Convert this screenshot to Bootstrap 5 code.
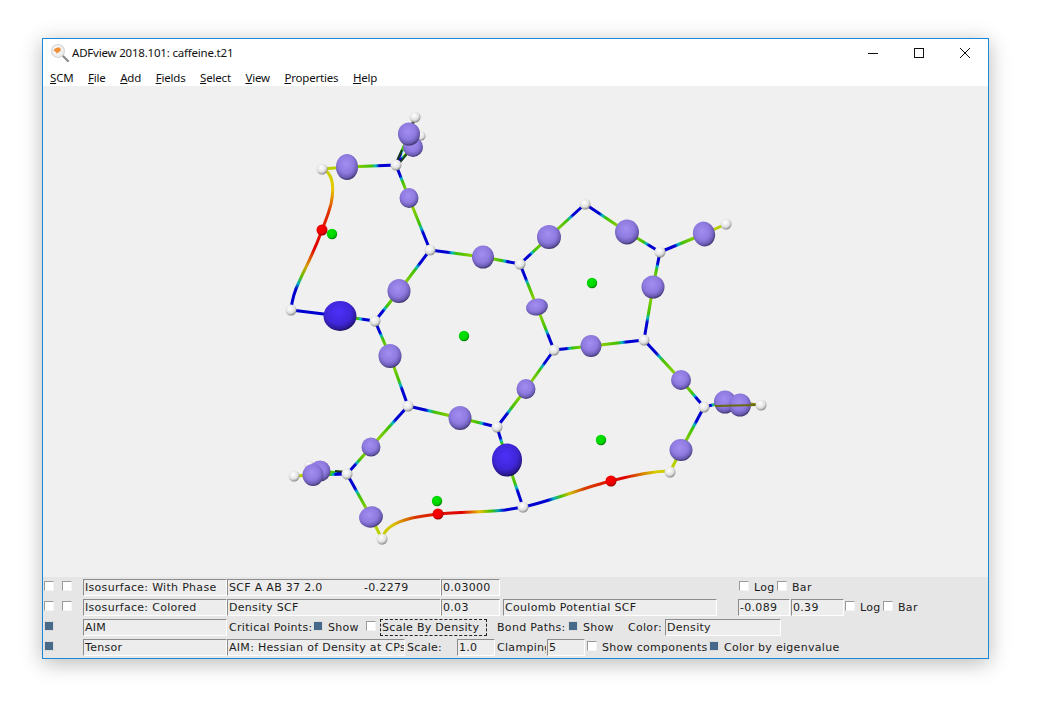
<!DOCTYPE html>
<html lang="en">
<head>
<meta charset="utf-8">
<title>ADFview 2018.101: caffeine.t21</title>
<link href="https://cdn.jsdelivr.net/npm/bootstrap@5.3.0/dist/css/bootstrap.min.css" rel="stylesheet">
<style>
html,body{background:#fff;margin:0;height:100%;overflow:hidden}
.stage{padding:38px 60px 0 42px}
.appwin{width:947px;height:621px;border:1px solid #1c86d8;background:#fff;box-shadow:0 4px 20px rgba(0,0,0,.28);color:#111}
.titlerow{height:27px;padding-left:7px;font:11.5px "Noto Sans",sans-serif;letter-spacing:-.2px;color:#111}
.titlerow .apptitle{margin-left:2px}
.ctrl-btn{width:46px;height:27px;display:flex;align-items:center;justify-content:center}
.menurow{height:20px;padding:2px 0 0 7px;gap:14.5px;font:11.5px "Noto Sans",sans-serif;letter-spacing:-.18px;line-height:20px}
.menurow .nav-link{padding:0;color:#111}
.canvas3d{display:block;width:945px;height:491px;background:#f0f0f0}
.ctlpanel{height:81px;background:#e6e6e6;padding-left:1px;font:11px "DejaVu Sans",sans-serif;color:#1c1c1c;letter-spacing:.3px}
.ctlrow{height:20px;align-items:center;white-space:nowrap}
.winchk.form-check-input{width:10px;height:10px;margin-top:0;margin-bottom:2px;flex:none;border:1px solid;border-color:#9a9a9a #f4f4f4 #f4f4f4 #9a9a9a;border-radius:0;background:#fff;box-shadow:none}
.winchk.form-check-input:checked{background:#47698a;border-color:#dcdcdc;box-shadow:inset 0 0 0 1px #47698a;background-image:none}
.winfield{height:17px;line-height:15px;padding-left:1px;background:#ededed;border:1px solid;border-color:#8c8c8c #fff #fff #8c8c8c;overflow:hidden;flex:none}
.spread{display:flex;justify-content:space-between}
.lbl{flex:none}
.cliplbl{flex:none;overflow:hidden}
.dashbox{height:17px;line-height:15px;border:1px dashed #222;flex:none;padding-left:1px}
.wd23{width:23px}.wd33{width:33px}.wd37{width:37px}.wd45{width:45px}.wd71{width:71px}.wd76{width:76px}.wd107{width:107px}
.wd38{width:38px}.wd49{width:49px}.wd50{width:50px}.wd52{width:52px}.wd53{width:53px}.wd59{width:59px}.wd84{width:84px}.wd116{width:116px}.wd144{width:144px}.wd178{width:178px}.wd214{width:214px}
.ml1{margin-left:1px}.ml2{margin-left:2px}.ml3{margin-left:3px}.ml4{margin-left:4px}.ml5{margin-left:5px}.ml8{margin-left:8px}.ml10{margin-left:10px}.ml11{margin-left:11px}.ml21{margin-left:21px}.ml29{margin-left:29px}.ml239{margin-left:239px}
</style>
</head>
<body>
<div class="stage">
<div class="appwin d-flex flex-column">
  <div class="titlerow d-flex align-items-center">
    <svg width="20" height="20" viewBox="0 0 20 20" aria-hidden="true">
      <defs><radialGradient id="lens" cx=".4" cy=".4" r=".7"><stop offset="0" stop-color="#fff"/><stop offset="1" stop-color="#e4e4e4"/></radialGradient></defs>
      <line x1="12" y1="12" x2="18" y2="18" stroke="#8a8a8a" stroke-width="2.2" stroke-linecap="round"/>
      <circle cx="8" cy="8" r="6.5" fill="url(#lens)" stroke="#d6d6d6" stroke-width="1.2"/>
      <path d="M3.500 7.500C4 5.500 6.500 4 9.500 4.500c1.200 .8 1.700 2.500 1 3.800C9 8.300 8.500 10.500 6.800 10.500 6 9 5 8 3.500 7.500z" fill="#ee9038"/>
    </svg>
    <span class="apptitle flex-grow-1">ADFview 2018.101: caffeine.t21</span>
    <div class="ctrl-btn"><svg width="10" height="10" viewBox="0 0 10 10" aria-hidden="true"><line x1="0" y1="5.500" x2="10" y2="5.500" stroke="#111"/></svg></div>
    <div class="ctrl-btn"><svg width="10" height="10" viewBox="0 0 10 10" aria-hidden="true"><rect x=".5" y=".5" width="9" height="9" fill="none" stroke="#111"/></svg></div>
    <div class="ctrl-btn"><svg width="10" height="10" viewBox="0 0 10 10" aria-hidden="true"><path d="M0 0L10 10M10 0L0 10" stroke="#111" fill="none"/></svg></div>
  </div>
  <nav class="menurow nav">
    <a class="nav-link" href="#"><u>S</u>CM</a>
    <a class="nav-link" href="#"><u>F</u>ile</a>
    <a class="nav-link" href="#"><u>A</u>dd</a>
    <a class="nav-link" href="#"><u>F</u>ields</a>
    <a class="nav-link" href="#"><u>S</u>elect</a>
    <a class="nav-link" href="#"><u>V</u>iew</a>
    <a class="nav-link" href="#"><u>P</u>roperties</a>
    <a class="nav-link" href="#"><u>H</u>elp</a>
  </nav>
  <svg class="canvas3d" id="mol" viewBox="43 86 945 491" role="img" aria-label="Caffeine molecule with bond paths and critical points">
    <defs>
      <radialGradient id="gP" cx=".45" cy=".38" r=".64"><stop offset="0" stop-color="#a28ef0"/><stop offset=".55" stop-color="#8f7be0"/><stop offset=".82" stop-color="#6c5cb4"/><stop offset="1" stop-color="#352c60"/></radialGradient>
      <radialGradient id="gB" cx=".45" cy=".38" r=".64"><stop offset="0" stop-color="#4d30f8"/><stop offset=".62" stop-color="#3f26d8"/><stop offset=".86" stop-color="#2c1a98"/><stop offset="1" stop-color="#160d50"/></radialGradient>
      <radialGradient id="gW" cx=".42" cy=".36" r=".68"><stop offset="0" stop-color="#fff"/><stop offset=".6" stop-color="#e2e2e2"/><stop offset=".85" stop-color="#a8a8a8"/><stop offset="1" stop-color="#666"/></radialGradient>
      <radialGradient id="gR" cx=".42" cy=".38" r=".65"><stop offset="0" stop-color="#ff0000"/><stop offset=".7" stop-color="#e80000"/><stop offset="1" stop-color="#800000"/></radialGradient>
      <radialGradient id="gG" cx=".42" cy=".38" r=".65"><stop offset="0" stop-color="#00e800"/><stop offset=".7" stop-color="#00d000"/><stop offset="1" stop-color="#006a00"/></radialGradient>
      <linearGradient id="c1" gradientUnits="userSpaceOnUse" x1="322" y1="169" x2="291" y2="310"><stop offset="0" stop-color="#c8d000"/><stop offset=".12" stop-color="#e8c800"/><stop offset=".28" stop-color="#e03000"/><stop offset=".55" stop-color="#e00000"/><stop offset=".68" stop-color="#d8a000"/><stop offset=".76" stop-color="#60c000"/><stop offset=".81" stop-color="#00b0c0"/><stop offset=".85" stop-color="#0000d0"/><stop offset="1" stop-color="#0000d0"/></linearGradient>
      <linearGradient id="c2" gradientUnits="userSpaceOnUse" x1="382" y1="539" x2="523" y2="507"><stop offset="0" stop-color="#c8d000"/><stop offset=".1" stop-color="#d8c000"/><stop offset=".27" stop-color="#d83000"/><stop offset=".58" stop-color="#e00000"/><stop offset=".7" stop-color="#e8c000"/><stop offset=".78" stop-color="#40c000"/><stop offset=".83" stop-color="#00a0c0"/><stop offset=".87" stop-color="#0000d0"/><stop offset="1" stop-color="#0000d0"/></linearGradient>
      <linearGradient id="c3" gradientUnits="userSpaceOnUse" x1="523" y1="507" x2="670" y2="471"><stop offset="0" stop-color="#0000d0"/><stop offset=".17" stop-color="#0000d0"/><stop offset=".21" stop-color="#00b0c0"/><stop offset=".26" stop-color="#50c000"/><stop offset=".32" stop-color="#d0c000"/><stop offset=".42" stop-color="#d84000"/><stop offset=".7" stop-color="#e00000"/><stop offset=".82" stop-color="#d88000"/><stop offset=".9" stop-color="#d8c800"/><stop offset="1" stop-color="#c8d000"/></linearGradient>
    </defs>
    <g id="tubes" fill="none" stroke-width="3">
      <path d="M322 169C334 172 334 190 331 204C328 216 325 222 322 230C313 255 305 268 299 282C295 290 292 300 291 310" stroke="url(#c1)"/>
      <path d="M382 539C384 528 395 522 412 518C422 516 430 515 438 514C460 512 490 512 505 510L523 507" stroke="url(#c2)"/>
      <path d="M523 507C555 500 585 487 611 481C630 476 650 471 670 471" stroke="url(#c3)"/>
    </g>
    <g id="bonds"></g>
    <g id="balls"></g>
  </svg>
  <div class="ctlpanel">
    <div class="ctlrow d-flex">
      <input class="form-check-input winchk" type="checkbox" aria-label="Surface on"><input class="form-check-input winchk ml8" type="checkbox" aria-label="Surface option">
      <div class="winfield wd144 ml11">Isosurface: With Phase</div>
      <div class="winfield wd214 spread"><span>SCF A AB 37 2.0</span><span class="wd76 d-block text-nowrap">-0.2279</span></div>
      <div class="winfield wd59">0.03000</div>
      <input class="form-check-input winchk ml239" type="checkbox" aria-label="Log"><span class="lbl wd23 ml5">Log</span>
      <input class="form-check-input winchk" type="checkbox" aria-label="Bar"><span class="lbl ml5">Bar</span>
    </div>
    <div class="ctlrow d-flex">
      <input class="form-check-input winchk" type="checkbox" aria-label="Colored on"><input class="form-check-input winchk ml8" type="checkbox" aria-label="Colored option">
      <div class="winfield wd144 ml11">Isosurface: Colored</div>
      <div class="winfield wd214">Density SCF</div>
      <div class="winfield wd59">0.03</div>
      <div class="winfield wd214 ml3">Coulomb Potential SCF</div>
      <div class="winfield wd52 ml21">-0.089</div>
      <div class="winfield wd53 ml1">0.39</div>
      <input class="form-check-input winchk ml1" type="checkbox" aria-label="Log"><span class="lbl wd23 ml5">Log</span>
      <input class="form-check-input winchk" type="checkbox" aria-label="Bar"><span class="lbl ml5">Bar</span>
    </div>
    <div class="ctlrow d-flex">
      <input class="form-check-input winchk" type="checkbox" checked aria-label="AIM">
      <div class="winfield wd144 ml29">AIM</div>
      <span class="lbl wd84 ml2">Critical Points:</span>
      <input class="form-check-input winchk" type="checkbox" checked aria-label="Show"><span class="lbl wd33 ml5">Show</span>
      <input class="form-check-input winchk ml5" type="checkbox" aria-label="Scale By Density"><div class="dashbox wd107 ml4">Scale By Density</div>
      <span class="lbl wd71 ml10">Bond Paths:</span>
      <input class="form-check-input winchk" type="checkbox" checked aria-label="Show"><span class="lbl wd45 ml5">Show</span>
      <span class="lbl wd37">Color:</span>
      <div class="winfield wd116">Density</div>
    </div>
    <div class="ctlrow d-flex">
      <input class="form-check-input winchk" type="checkbox" checked aria-label="Tensor">
      <div class="winfield wd144 ml29">Tensor</div>
      <div class="winfield wd178">AIM: Hessian of Density at CPs</div>
      <span class="lbl wd50 ml2">Scale:</span>
      <div class="winfield wd38">1.0</div>
      <span class="cliplbl wd49 ml2">Clamping</span>
      <div class="winfield wd38 ml1">5</div>
      <input class="form-check-input winchk ml2" type="checkbox" aria-label="Show components"><span class="lbl wd107 ml5">Show components</span>
      <input class="form-check-input winchk" type="checkbox" checked aria-label="Color by eigenvalue"><span class="lbl ml5">Color by eigenvalue</span>
    </div>
  </div>
</div>
</div>
<script>
(function(){
var NS='http://www.w3.org/2000/svg',svg=document.getElementById('mol'),defs=svg.querySelector('defs'),B=document.getElementById('bonds'),G=document.getElementById('balls'),n=0;
function el(t,a,p){var e=document.createElementNS(NS,t);for(var k in a)e.setAttribute(k,a[k]);p.appendChild(e);return e;}
function half(x1,y1,x2,y2,s){var id='b'+(n++),g=el('linearGradient',{id:id,gradientUnits:'userSpaceOnUse',x1:x1,y1:y1,x2:x2,y2:y2},defs);
 [[0,'#0000d0'],[s,'#0000d0'],[s+.07,'#00b8c8'],[s+.16,'#40c000'],[1,'#b8d800']].forEach(function(c){el('stop',{offset:c[0],'stop-color':c[1]},g);});
 el('line',{x1:x1,y1:y1,x2:x2,y2:y2,stroke:'url(#'+id+')','stroke-width':3},B);}
function bond(a,b,c,hy,col){half(a[0],a[1],b[0],b[1],.34);
 if(hy)el('line',{x1:c[0],y1:c[1],x2:b[0],y2:b[1],stroke:col||'#b8d000','stroke-width':3},B);else half(c[0],c[1],b[0],b[1],.34);}
var C1=[396,165],H1=[322,169],N1=[430,250],N2=[520,264],N3=[375,321],H2=[291,310],N4=[408,406],N5=[497,427],N6=[554,350],N7=[644,340],N8=[585,204],N9=[660,252],H3=[726,224],N10=[704,407],H4=[761,405],H5=[670,472],N11=[347,474],H6=[294,476],H7=[309,465],H8=[382,539],N12=[523,507],H9=[415,117],H10=[421,136];
[[C1,[347,167],H1,1],[C1,[409,198],N1],[N1,[483,257],N2],[N1,[399,291],N3],[N3,[340,316],H2,1,'#0000d0'],[N3,[390,356],N4],[N2,[549,237],N8],[N8,[627,232],N9],[N9,[704,234],H3,1],[N9,[653,287],N7],[N7,[591,346],N6],[N6,[537,307],N2],[N6,[526,389],N5],[N7,[681,380],N10],[N10,[681,450],H5,1],[N10,[725,402],H4,1,'#8a8a10'],[N4,[460,418],N5],[N4,[371,447],N11],[N11,[371,517],H8,1],[N11,[320,471],H7,1,'#6a7010'],[N11,[313,475],H6,1],[N5,[507,460],N12],[C1,[409,134],H9,1,'#4a4a20'],[C1,[413,147],H10,1]].forEach(function(b){bond(b[0],b[1],b[2],b[3],b[4]);});
[[396,163,402,150],[398,165,410,150],[335,471,347,472]].forEach(function(l){el('line',{x1:l[0],y1:l[1],x2:l[2],y2:l[3],stroke:'#1c3a14','stroke-width':2},B);});
function ball(x,y,rx,ry,f,rot){var a={cx:x,cy:y,rx:rx,ry:ry,fill:'url(#'+f+')'};if(rot)a.transform='rotate('+rot+' '+x+' '+y+')';el('ellipse',a,G);}
ball(421,136,4.5,4.5,'gW');ball(415,117,5.5,5.5,'gW');
ball(413,147,10,10,'gP');ball(409,134,11,11.5,'gP');
ball(347,167,11,13,'gP');ball(409,198,9.5,10,'gP');ball(483,257,11,11.5,'gP');ball(399,291,11.5,12,'gP');
ball(340,316,16.5,15,'gB');ball(390,356,11.5,12,'gP');ball(460,418,11.5,12,'gP');ball(507,460,15,16.5,'gB');ball(526,389,9.5,10,'gP');
ball(549,237,12,12,'gP');ball(627,232,12,12.5,'gP');ball(704,234,11,12.5,'gP',-15);ball(653,287,11.5,11.5,'gP');ball(537,307,11,8.5,'gP',-10);ball(591,346,10.5,11,'gP');ball(681,380,10,10,'gP');ball(725,402,11,11.5,'gP');ball(740,405,11,11.5,'gP');
ball(371,447,9.5,9.5,'gP');ball(309,465,4.5,4.5,'gW');ball(320,471,10.5,10.5,'gP');ball(313,475,10.5,11,'gP');ball(371,517,12,10.5,'gP',-15);ball(681,450,11.5,11,'gP');
el('line',{x1:715,y1:406,x2:757,y2:405,stroke:'#6a6a10','stroke-width':2},G);
[[396,165],[322,169],[430,250],[520,264],[291,310],[375,321],[408,406],[497,427],[554,350],[644,340],[585,204],[660,252],[726,224],[704,407],[761,405],[670,472],[347,474],[294,476],[382,539],[523,507]].forEach(function(a){ball(a[0],a[1],5.5,5.5,'gW');});
[[322,230],[438,514],[611,481]].forEach(function(a){ball(a[0],a[1],5.5,5.5,'gR');});
[[332,234],[592,283],[464,336],[601,440],[437,501]].forEach(function(a){ball(a[0],a[1],5.2,5.2,'gG');});
})();
</script>
<script src="https://cdn.jsdelivr.net/npm/bootstrap@5.3.0/dist/js/bootstrap.bundle.min.js"></script>
</body>
</html>
